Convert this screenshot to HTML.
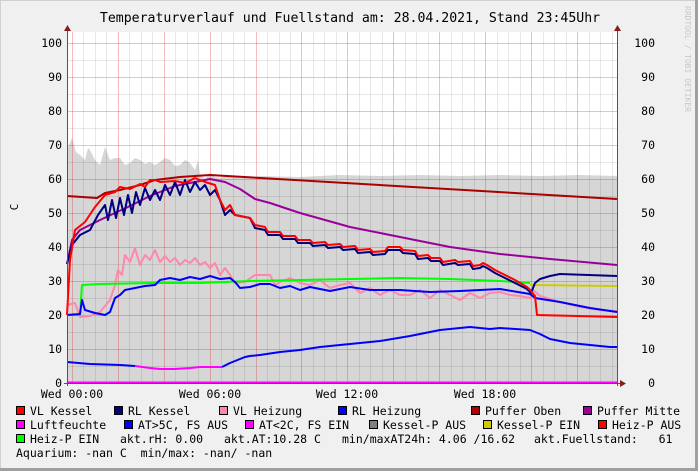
<!DOCTYPE html>
<html><head><meta charset="utf-8"><style>
html,body{margin:0;padding:0;background:#f0f0f0;}
svg{display:block;}
text{font-family:"DejaVu Sans Mono","Liberation Mono",monospace;fill:#000;white-space:pre;}
</style></head><body>
<svg width="698" height="471" viewBox="0 0 698 471" xmlns="http://www.w3.org/2000/svg">
<rect x="0" y="0" width="698" height="471" fill="#f0f0f0"/>
<line x1="0" y1="0.5" x2="698" y2="0.5" stroke="#d0d0d0"/>
<line x1="0.5" y1="0" x2="0.5" y2="471" stroke="#d0d0d0"/>
<line x1="0" y1="469.5" x2="698" y2="469.5" stroke="#a0a0a0" stroke-width="3"/>
<line x1="696.5" y1="0" x2="696.5" y2="471" stroke="#a0a0a0" stroke-width="3"/>
<text x="350" y="22" font-size="13.2" text-anchor="middle">Temperaturverlauf und Fuellstand am: 28.04.2021, Stand 23:45Uhr</text>
<text x="0" y="0" font-size="8" style="fill:#c8c8c8" transform="translate(685,6) rotate(90)">RRDTOOL / TOBI OETIKER</text>
<text font-size="11" transform="translate(18,207) rotate(-90)" text-anchor="middle">C</text>
<rect x="67" y="32" width="550" height="351" fill="#fff"/>
<polygon fill="#d6d6d6" points="67,383 67,150 72,138 76,152 80,155 85,160 88,148 90,150 95,160 100,165 105,147 110,160 115,158 120,158 125,165 130,163 135,158 140,160 145,164 150,162 155,165 160,162 165,158 170,160 175,166 180,165 185,160 190,163 195,170 198,160 200,175 205,179 210,173 215,177 220,178 230,175 240,178 260,176 300,177 340,175 380,176 420,175 460,176 500,175 540,176 580,175 617,176 617,383"/>
<g stroke="rgba(0,0,0,0.09)" stroke-width="1">
<line x1="67" y1="366.5" x2="617" y2="366.5"/><line x1="67" y1="332.5" x2="617" y2="332.5"/><line x1="67" y1="298.5" x2="617" y2="298.5"/><line x1="67" y1="264.5" x2="617" y2="264.5"/><line x1="67" y1="230.5" x2="617" y2="230.5"/><line x1="67" y1="196.5" x2="617" y2="196.5"/><line x1="67" y1="162.5" x2="617" y2="162.5"/><line x1="67" y1="128.5" x2="617" y2="128.5"/><line x1="67" y1="94.5" x2="617" y2="94.5"/><line x1="67" y1="60.5" x2="617" y2="60.5"/>
<line x1="83.5" y1="32" x2="83.5" y2="383"/><line x1="95.5" y1="32" x2="95.5" y2="383"/><line x1="106.5" y1="32" x2="106.5" y2="383"/><line x1="129.5" y1="32" x2="129.5" y2="383"/><line x1="141.5" y1="32" x2="141.5" y2="383"/><line x1="152.5" y1="32" x2="152.5" y2="383"/><line x1="175.5" y1="32" x2="175.5" y2="383"/><line x1="187.5" y1="32" x2="187.5" y2="383"/><line x1="198.5" y1="32" x2="198.5" y2="383"/><line x1="221.5" y1="32" x2="221.5" y2="383"/><line x1="233.5" y1="32" x2="233.5" y2="383"/><line x1="244.5" y1="32" x2="244.5" y2="383"/><line x1="267.5" y1="32" x2="267.5" y2="383"/><line x1="279.5" y1="32" x2="279.5" y2="383"/><line x1="290.5" y1="32" x2="290.5" y2="383"/><line x1="313.5" y1="32" x2="313.5" y2="383"/><line x1="324.5" y1="32" x2="324.5" y2="383"/><line x1="336.5" y1="32" x2="336.5" y2="383"/><line x1="359.5" y1="32" x2="359.5" y2="383"/><line x1="370.5" y1="32" x2="370.5" y2="383"/><line x1="382.5" y1="32" x2="382.5" y2="383"/><line x1="405.5" y1="32" x2="405.5" y2="383"/><line x1="416.5" y1="32" x2="416.5" y2="383"/><line x1="428.5" y1="32" x2="428.5" y2="383"/><line x1="451.5" y1="32" x2="451.5" y2="383"/><line x1="462.5" y1="32" x2="462.5" y2="383"/><line x1="474.5" y1="32" x2="474.5" y2="383"/><line x1="497.5" y1="32" x2="497.5" y2="383"/><line x1="508.5" y1="32" x2="508.5" y2="383"/><line x1="520.5" y1="32" x2="520.5" y2="383"/><line x1="543.5" y1="32" x2="543.5" y2="383"/><line x1="554.5" y1="32" x2="554.5" y2="383"/><line x1="566.5" y1="32" x2="566.5" y2="383"/><line x1="589.5" y1="32" x2="589.5" y2="383"/><line x1="600.5" y1="32" x2="600.5" y2="383"/><line x1="612.5" y1="32" x2="612.5" y2="383"/>
</g>
<g stroke="rgba(220,40,40,0.3)" stroke-width="1">
<line x1="67" y1="349.5" x2="617" y2="349.5"/><line x1="67" y1="315.5" x2="617" y2="315.5"/><line x1="67" y1="281.5" x2="617" y2="281.5"/><line x1="67" y1="247.5" x2="617" y2="247.5"/><line x1="67" y1="213.5" x2="617" y2="213.5"/><line x1="67" y1="179.5" x2="617" y2="179.5"/><line x1="67" y1="145.5" x2="617" y2="145.5"/><line x1="67" y1="111.5" x2="617" y2="111.5"/><line x1="67" y1="77.5" x2="617" y2="77.5"/><line x1="67" y1="43.5" x2="617" y2="43.5"/>
<line x1="72.5" y1="32" x2="72.5" y2="383"/><line x1="118.5" y1="32" x2="118.5" y2="383"/><line x1="164.5" y1="32" x2="164.5" y2="383"/><line x1="210.5" y1="32" x2="210.5" y2="383"/><line x1="256.5" y1="32" x2="256.5" y2="383"/><line x1="301.5" y1="32" x2="301.5" y2="383"/><line x1="347.5" y1="32" x2="347.5" y2="383"/><line x1="393.5" y1="32" x2="393.5" y2="383"/><line x1="439.5" y1="32" x2="439.5" y2="383"/><line x1="485.5" y1="32" x2="485.5" y2="383"/><line x1="531.5" y1="32" x2="531.5" y2="383"/><line x1="577.5" y1="32" x2="577.5" y2="383"/>
</g>
<g fill="none" stroke-width="2" stroke-linejoin="round">
<polyline stroke="#aa0000" points="67,196 97,198 105,193 120,190 140,185 155,180 180,177 210,175 617,199"/>
<polyline stroke="#990099" points="67,264 72,240 80,230 100,220 130,206 150,196 175,186 200,181 210,179 225,182 240,189 255,199 270,203 300,213 350,227 400,237 450,247 500,254 550,259 617,265"/>
<polyline stroke="#ff88aa" points="67,305 75,303 80,317 90,316 100,312 110,300 115,285 118,270 122,275 125,255 130,262 135,248 140,265 145,255 150,260 155,250 160,262 165,256 170,262 175,258 180,265 185,260 190,263 195,258 200,265 205,262 210,268 215,263 220,275 225,268 230,275 235,283 245,282 255,275 270,275 275,285 280,282 290,278 300,283 310,285 320,280 330,288 340,285 350,283 360,293 370,288 380,295 390,290 400,295 410,295 420,290 430,298 440,290 450,295 460,300 470,293 480,298 490,293 500,292 510,295 520,296 530,298 533,290 540,296 560,302 580,307 600,310 617,311"/>
<polyline stroke="#00ff00" points="67,315 80,315 82,285 100,284 150,283 200,283 250,281 300,280 400,278 450,279 500,281 530,283"/>
<polyline stroke="#cccc00" points="530,285 617,286"/>
<polyline stroke="#0000ff" points="67,315 80,314 82,300 85,310 95,313 105,315 110,312 115,298 120,295 125,290 135,288 145,286 155,285 160,280 170,278 180,280 190,277 200,279 210,276 220,279 230,278 235,282 240,288 250,287 260,284 270,284 280,288 290,286 300,290 310,287 320,289 330,291 350,287 370,290 400,290 430,292 460,291 500,289 530,294 535,298 560,302 590,308 617,312"/>
<polyline stroke="#000080" points="67,264 72,245 80,235 90,230 98,215 105,205 108,220 112,200 116,218 120,198 124,215 128,195 132,213 136,192 140,205 145,188 150,200 155,190 160,200 165,185 170,195 175,182 180,195 185,180 190,192 195,182 200,190 205,185 210,195 215,190 220,200 225,215 230,210 235,215 250,218 255,228 265,230 268,235 280,235 283,239 295,239 298,243 310,243 313,246 325,245 328,248 340,247 343,250 355,249 358,253 370,252 373,255 385,254 388,250 400,250 403,253 415,254 418,259 428,258 431,261 440,261 443,265 455,263 458,265 470,264 473,269 480,268 483,266 487,268 495,273 505,278 515,283 527,289 531,293 535,283 540,279 550,276 560,274 617,276"/>
<polyline stroke="#ff0000" points="67,315 70,260 75,230 85,222 95,207 105,195 115,192 120,187 130,189 140,184 145,187 150,180 155,180 160,182 175,181 185,183 195,178 205,182 215,185 220,200 225,210 230,205 235,215 250,218 255,225 265,227 268,232 280,232 283,236 295,236 298,240 310,240 313,243 325,242 328,245 340,244 343,247 355,246 358,250 370,249 373,252 385,251 388,247 400,247 403,250 415,251 418,256 428,255 431,258 440,258 443,262 455,260 458,262 470,261 473,266 480,265 483,263 487,265 495,270 505,275 515,280 527,287 530,290 535,296 537,315 617,317"/>
<polyline stroke="#0000ff" points="67,362 90,364 120,365 135,366"/>
<polyline stroke="#ff00ff" points="135,366 150,368 160,369 175,369 190,368 200,367 222,367"/>
<polyline stroke="#0000ff" points="222,367 230,363 240,359 245,357 250,356 260,355 280,352 300,350 320,347 350,344 380,341 410,336 440,330 470,327 490,329 500,328 530,330 540,334 550,339 570,343 590,345 610,347 617,347"/>
<line stroke="#ff00ff" x1="67" y1="382.5" x2="617" y2="382.5"/>
</g>
<g stroke="#555" stroke-width="1">
<line x1="67.5" y1="30" x2="67.5" y2="386"/><line x1="617.5" y1="30" x2="617.5" y2="386"/>
<line x1="64" y1="383.5" x2="621" y2="383.5"/>
</g>
<g fill="#8b1a1a"><polygon points="64,31 71,31 67.5,25"/><polygon points="614,31 621,31 617.5,25"/><polygon points="620,380 620,387 626,383.5"/></g>
<g font-size="11.5" text-anchor="end">
<text x="62" y="47">100</text><text x="62" y="81">90</text><text x="62" y="115">80</text><text x="62" y="149">70</text><text x="62" y="183">60</text><text x="62" y="217">50</text><text x="62" y="251">40</text><text x="62" y="285">30</text><text x="62" y="319">20</text><text x="62" y="353">10</text><text x="62" y="387">0</text>
</g>
<g font-size="11.5" text-anchor="end">
<text x="655" y="47">100</text><text x="655" y="81">90</text><text x="655" y="115">80</text><text x="655" y="149">70</text><text x="655" y="183">60</text><text x="655" y="217">50</text><text x="655" y="251">40</text><text x="655" y="285">30</text><text x="655" y="319">20</text><text x="655" y="353">10</text><text x="655" y="387">0</text>
</g>
<g font-size="11.5" text-anchor="middle">
<text x="72" y="398">Wed 00:00</text><text x="210" y="398">Wed 06:00</text><text x="347" y="398">Wed 12:00</text><text x="485" y="398">Wed 18:00</text>
</g>
<g stroke="#000" stroke-width="1">
<rect x="16.5" y="406.5" width="8" height="8" fill="#ff0000"/><rect x="114.5" y="406.5" width="8" height="8" fill="#000080"/><rect x="219.5" y="406.5" width="8" height="8" fill="#ff88aa"/><rect x="338.5" y="406.5" width="8" height="8" fill="#0000ff"/><rect x="471.5" y="406.5" width="8" height="8" fill="#aa0000"/><rect x="583.5" y="406.5" width="8" height="8" fill="#990099"/>
<rect x="16.5" y="420.5" width="8" height="8" fill="#ff00ff"/><rect x="124.5" y="420.5" width="8" height="8" fill="#0000ff"/><rect x="245.5" y="420.5" width="8" height="8" fill="#ff00ff"/><rect x="369.5" y="420.5" width="8" height="8" fill="#808080"/><rect x="483.5" y="420.5" width="8" height="8" fill="#cccc00"/><rect x="598.5" y="420.5" width="8" height="8" fill="#ff0000"/>
<rect x="16.5" y="434.5" width="8" height="8" fill="#00ff00"/>
</g>
<g font-size="11.5">
<text x="30" y="415">VL Kessel</text><text x="128" y="415">RL Kessel</text><text x="233" y="415">VL Heizung</text><text x="352" y="415">RL Heizung</text><text x="485" y="415">Puffer Oben</text><text x="597" y="415">Puffer Mitte</text>
<text x="30" y="429">Luftfeuchte</text><text x="138" y="429">AT&gt;5C, FS AUS</text><text x="259" y="429">AT&lt;2C, FS EIN</text><text x="383" y="429">Kessel-P AUS</text><text x="497" y="429">Kessel-P EIN</text><text x="612" y="429">Heiz-P AUS</text>
<text x="30" y="443">Heiz-P EIN</text><text x="120" y="443">akt.rH: 0.00</text><text x="224" y="443">akt.AT:10.28 C</text><text x="342" y="443">min/maxAT24h: 4.06 /16.62</text><text x="534" y="443">akt.Fuellstand:   61</text>
<text x="16" y="457">Aquarium: -nan C  min/max: -nan/ -nan</text>
</g>
</svg>
</body></html>
